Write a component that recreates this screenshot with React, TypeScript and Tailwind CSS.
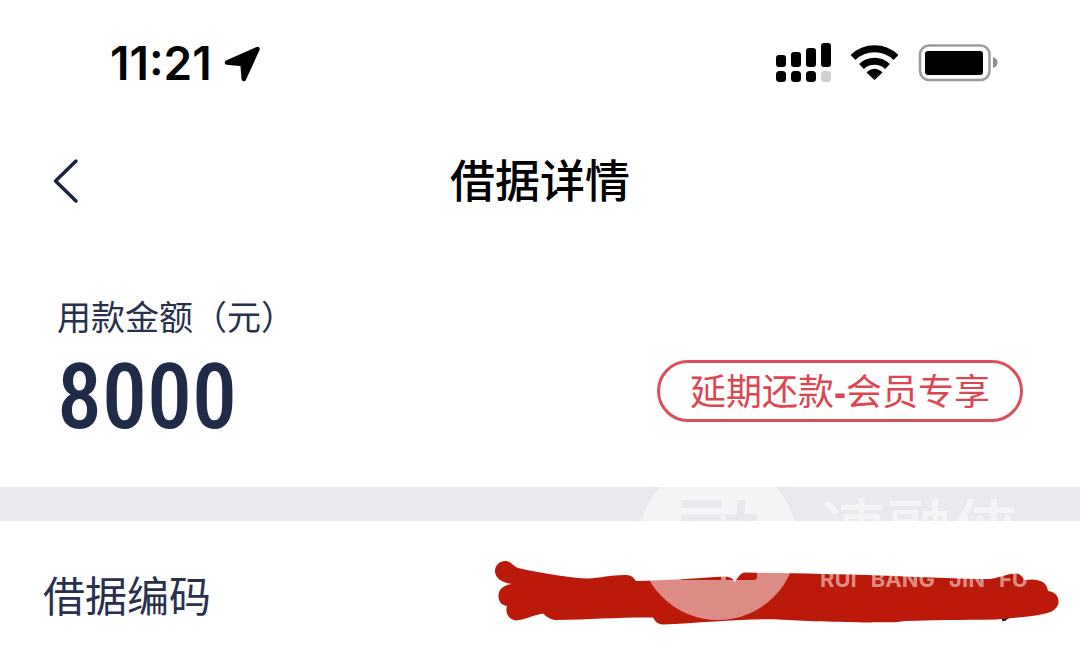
import React from 'react';

const LocationIcon = () => (
    <svg className="h-[38px] w-[38px]" viewBox="222 44 38 38" fill="#000" stroke="#000" strokeWidth={4.500} strokeLinejoin="round" aria-hidden="true">
        <path d="M227 62.500 L257.500 49 L243.800 79 L242.500 64 Z" />
    </svg>
);

const SignalIcon = () => (
    <svg className="h-[42px] w-[56px]" viewBox="777 42 56 42" fill="#000" aria-hidden="true">
        <rect x="777" y="55" width="10" height="12" rx="3" />
        <rect x="792" y="52" width="10" height="15" rx="3" />
        <rect x="807" y="48" width="10" height="19" rx="3" />
        <rect x="822" y="43" width="10" height="24" rx="3" />
        <rect x="777" y="71" width="10" height="11" rx="3.500" />
        <rect x="792" y="71" width="10" height="11" rx="3.500" />
        <rect x="807" y="71" width="10" height="11" rx="3.500" />
        <rect x="822" y="71" width="10" height="11" rx="3.500" fill="#cfcfcf" />
    </svg>
);

const WifiIcon = () => (
    <svg className="h-[42px] w-[50px]" viewBox="851 42 50 42" fill="none" stroke="#000" strokeWidth={7} aria-hidden="true">
        <path d="M854 57.500 A31 31 0 0 1 897 57.500" />
        <path d="M862.500 66.500 A19 19 0 0 1 888.500 66.500" />
        <path d="M867.500 72.500 Q875.500 65 883.500 72.500 L875.500 80 Z" fill="#000" stroke="none" />
    </svg>
);

const BatteryIcon = () => (
    <svg className="h-[42px] w-[80px]" viewBox="918 42 80 42" aria-hidden="true">
        <rect x="920" y="45.500" width="69.500" height="34.500" rx="9" fill="none" stroke="#9b9b9b" strokeWidth={2.500} />
        <rect x="925" y="51" width="58" height="24" rx="3" fill="#000" />
        <path d="M993 57 Q997.500 58.500 997.500 62.500 Q997.500 66.500 993 68 Z" fill="#8e8e8e" />
    </svg>
);

const BackIcon = () => (
    <svg className="h-[48px] w-[30px]" viewBox="0 0 30 48" fill="none" stroke="#1a2240" strokeWidth={3.500} strokeLinecap="round" strokeLinejoin="round" aria-hidden="true">
        <path d="M26 4 L5.500 24 L26 44" />
    </svg>
);

const Scribble = () => (
    <svg className="h-[76px] w-[574px]" viewBox="490 560 574 76" aria-hidden="true">
        <path d="M1002 614 h7 v4 l-4 3 h-3 Z" fill="#1c2340" />
        <path
            fill="#bb190a"
            d="M505 561 C511 561 513 566 518 568 C545 574 571 578 588 578.500 C600 578 610 575 625 575 C631 575 633 577 636 581 C665 580.500 700 578 725 576.500 C731 577 733 579 735 582 C738 577 741 572 746 572.500 C790 573.500 840 574 880 575.500 C920 577 960 579 990 579 C1002 577 1008 573.500 1016 573.500 C1021 574 1022 577 1025 580 C1037 578 1047 581 1048 591 C1056 592 1059 597 1058.500 603 C1057 610 1050 613 1043 614 C1030 617 1012 618 996 619.500 C960 620 930 620 905 621 C895 623 885 622 870 622.500 C840 622 800 621 779 619.500 C750 618 700 623 663 624.500 C657 624 655 621 653 617.500 C625 617 590 619.500 555 620 C549 619 546 616 543 613.500 C533 615 524 620 516 620.500 C508 619 505 613 507 606 C501 605 498 601 498.500 594 C500 588 505 585 512 584 C502 583 495 578 495 571 C495 565 500 561 505 561 Z"
        />
    </svg>
);

const WatermarkLogo = () => (
    <svg className="h-[158px] w-[158px]" viewBox="0 0 158 158" aria-hidden="true">
        <mask id="logo-cut">
            <circle cx="79" cy="79" r="79" fill="#fff" />
            <g fill="#000">
                <rect x="42" y="38" width="40" height="8" />
                <rect x="42" y="52" width="40" height="8" />
                <rect x="98" y="38" width="8" height="18" />
                <rect x="87" y="52" width="31" height="8" />
                <path d="M42 70 H82 V118 H42 Z M87 70 H118 V115 Q118 118 114 118 H87 Z" />
            </g>
        </mask>
        <rect width="158" height="158" fill="#fff" mask="url(#logo-cut)" />
    </svg>
);

const Watermark = () => (
    <div className="pointer-events-none absolute -top-[25px] right-[52px] flex gap-[23px] text-white opacity-50">
        <WatermarkLogo />
        <div className="w-[208px] pt-[33px]">
            <div className="text-[66px] font-medium leading-[72px]">速融侠</div>
            <div className="flex justify-between font-['Inter','Liberation_Sans',sans-serif] text-[22px] font-bold leading-[24px]">
                <span>RUI</span>
                <span>BANG</span>
                <span>JIN</span>
                <span>FU</span>
            </div>
        </div>
    </div>
);

const StatusBar = () => (
    <div className="flex h-[126px] items-center justify-between pl-[110px] pr-[82px]">
        <div className="flex items-center gap-[10px]">
            <span className="font-['Inter','Liberation_Sans',sans-serif] text-[46px] font-semibold leading-[48px] text-black">11:21</span>
            <LocationIcon />
        </div>
        <div className="flex items-center gap-[18px]">
            <SignalIcon />
            <WifiIcon />
            <BatteryIcon />
        </div>
    </div>
);

export default function App() {
    return (
        <main className="bg-white font-['Liberation_Sans','Noto_Sans_CJK_SC',sans-serif] text-[#28304c]">
            <StatusBar />
            <header className="grid h-[110px] grid-cols-[1fr_auto_1fr] items-center px-[50px]">
                <button type="button" aria-label="返回" className="justify-self-start">
                    <BackIcon />
                </button>
                <h1 className="pt-[4px] text-[45px] font-medium leading-[56px] text-black">借据详情</h1>
            </header>

            <section className="px-[57px] pb-[41px] pt-[58px]">
                <p className="text-[34px] leading-[48px]">用款金额（元）</p>
                <div className="mt-[8px] flex items-center justify-between">
                    <p className="font-['Roboto_Condensed','Liberation_Sans_Narrow','Noto_Sans_CJK_SC',sans-serif] text-[90px] font-medium leading-[96px] text-[#202b49]">8000</p>
                    <button type="button" className="mb-[14px] h-[62px] rounded-full border-[3px] border-[#d9505a] px-[30px] pt-[4px] text-[36px] leading-[48px] text-[#dd4550]">
                        延期还款<span className="font-bold">-</span>会员专享
                    </button>
                </div>
            </section>

            <div className="relative">
                <div className="h-[34px] bg-[#e8e9ed]" />
                <section className="flex items-center justify-between pb-[22px] pl-[43px] pr-[16px] pt-[39px]">
                    <span className="text-[42px] leading-[56px]">借据编码</span>
                    <Scribble />
                </section>
                <Watermark />
            </div>
        </main>
    );
}
